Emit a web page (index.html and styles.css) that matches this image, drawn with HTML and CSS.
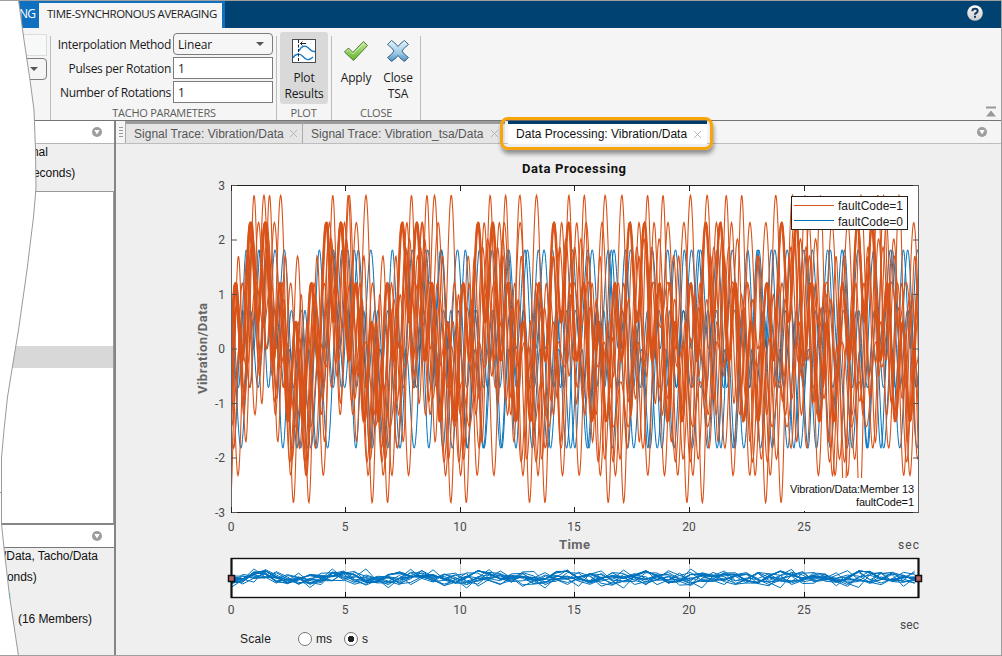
FILE: index.html
```html
<!DOCTYPE html>
<html lang="en">
<head>
<meta charset="utf-8">
<title>Time-Synchronous Averaging</title>
<link rel="stylesheet" href="styles.css">
</head>
<body>
<div class="app">
  <header class="titlebar">
    <div class="ribbon-tabs">
      <span class="ribbon-tab">NG</span>
      <span class="ribbon-tab active"><span class="w-tab">TIME-SYNCHRONOUS AVERAGING</span></span>
    </div>
    <svg class="help" width="16" height="16" viewBox="0 0 16 16"><defs><linearGradient id="hg" x1="0" y1="0" x2="0" y2="1"><stop offset="0" stop-color="#fff"/><stop offset="1" stop-color="#c9c9c9"/></linearGradient></defs><circle cx="8" cy="8" r="7.8" fill="url(#hg)"/><path d="M5.3 6.2Q5.3 3.8 8 3.8T10.7 6Q10.7 7.200 9.200 8Q8 8.600 8 9.700" fill="none" stroke="#123a62" stroke-width="2"/><rect x="7" y="10.800" width="2" height="2" fill="#123a62"/></svg>
  </header>

  <div class="ribbon">
    <section class="group cut">
      <div class="ghost-field"></div>
      <div class="ghost-select"><i class="caret"></i></div>
    </section>
    <section class="group params">
      <div class="form">
        <label>Interpolation Method</label><div class="select"><span>Linear</span><i class="caret"></i></div>
        <label>Pulses per Rotation</label><div class="input">1</div>
        <label>Number of Rotations</label><div class="input">1</div>
      </div>
      <div class="group-name">TACHO PARAMETERS</div>
    </section>
    <section class="group plot">
      <div class="buttons"><div class="tool pressed">
        <svg width="24" height="24" viewBox="0 0 24 24"><rect x=".5" y=".5" width="23" height="23" fill="#fff" stroke="#4b4b4b"/><path d="M1 19C3 14.500 8 14 11 17.500S17 22 21 18" fill="none" stroke="#1479c9" stroke-width="1.300"/><path d="M7 12C9 6.500 13.500 6 16.500 9S20 12.500 23 12.500" fill="none" stroke="#1479c9" stroke-width="1.300"/><path d="M6.500 1V23" stroke="#222" stroke-dasharray="3 1.500"/><path d="M8 4.500H14M10.500 2.500L8.500 4.500L10.500 6.500" fill="none" stroke="#222"/></svg>
        <span>Plot<br>Results</span></div></div>
      <div class="group-name">PLOT</div>
    </section>
    <section class="group close">
      <div class="buttons">
        <div class="tool">
          <svg width="26" height="24" viewBox="0 0 26 24"><defs><linearGradient id="g1" x1="0" y1="0" x2="0" y2="1"><stop offset="0" stop-color="#c9ea9b"/><stop offset="1" stop-color="#5db728"/></linearGradient></defs><path d="M1.500 13L5.500 9L9.800 13.500L20.500 2.500L24.500 6.500L10.500 21.500Z" fill="url(#g1)" stroke="#4b793c"/><path d="M3.300 13L5.600 10.700L9.800 15L20.600 4.200" fill="none" stroke="#e2f5c8" stroke-width=".8"/></svg>
          <span>Apply</span></div>
        <div class="tool">
          <svg width="24" height="24" viewBox="0 0 24 24"><defs><linearGradient id="g2" x1="0" y1="0" x2="0" y2="1"><stop offset="0" stop-color="#e3f4fb"/><stop offset=".6" stop-color="#9ccbe5"/><stop offset="1" stop-color="#4b8bc2"/></linearGradient></defs><path d="M5.500 1.500Q9 3.500 12 7.500Q15 3.500 18.500 1.500L22.500 5.500Q18.500 8 16 12Q18.500 16 22.500 18.500L18.500 22.500Q15 20.500 12 16.500Q9 20.500 5.500 22.500L1.500 18.500Q5.500 16 8 12Q5.500 8 1.500 5.500Z" fill="url(#g2)" stroke="#3d6384"/></svg>
          <span>Close<br>TSA</span></div>
      </div>
      <div class="group-name">CLOSE</div>
    </section>
    <svg class="collapse" width="12" height="12" viewBox="0 0 12 12"><path d="M1 1.500H11" stroke="#999" stroke-width="2"/><path d="M6 4.500L11 10.500H1Z" fill="#999"/></svg>
  </div>

  <div class="body">
    <aside class="side">
      <div class="panel-head"><i class="menu-dot"></i></div>
      <div class="info first"><p class="l1">nal</p><p class="l2">econds)</p></div>
      <div class="list"><div class="selected"></div></div>
      <div class="panel-head second"><i class="menu-dot"></i></div>
      <div class="info details"><p class="d1">/Data, Tacho/Data</p><p class="d2">onds)</p><p class="d3">l</p><p class="d4">(16 Members)</p></div>
    </aside>
    <main class="main">
      <div class="doc-bar">
        <div class="grip"></div>
        <div class="doc first-doc"><span>Signal Trace: Vibration/Data</span><b class="x"></b></div>
        <div class="doc second-doc"><span>Signal Trace: Vibration_tsa/Data</span><b class="x"></b></div>
        <div class="doc current"><span>Data Processing: Vibration/Data</span><b class="x"></b><div class="callout"></div></div>
        <i class="menu-dot bar-menu"></i>
      </div>
      <svg id="figure" class="figure" width="885" height="486" viewBox="116 144 885 486"></svg>
      <div class="scale"><span class="scale-label">Scale</span><span class="radio"></span><span class="ms">ms</span><span class="radio on"></span><span>s</span></div>
    </main>
  </div>
  <svg class="torn" width="40" height="656" viewBox="0 0 40 656"><path d="M0 0H18.500L24 40L30 80L34 110L35.500 150L36 188L33.500 217L27 270L18.500 330L13 363L7.500 397L4 430L1.500 458V524L4 548L9.500 596L18.500 656H0Z" fill="#fff"/><path d="M18.500 0L24 40L30 80L34 110L35.500 150L36 188L33.500 217L27 270L18.500 330L13 363L7.500 397L4 430L1.500 458V524L4 548L9.500 596L18.500 656M0 492.500H2" fill="none" stroke="#9a9a9a"/></svg>
</div>
<script src="script.js"></script>
</body>
</html>
```
FILE: styles.css
```css
* { box-sizing: border-box; }
body { margin: 0; background: #fff; font: 12px "Liberation Sans", Arial, sans-serif; color: #1a1a1a; }
p { margin: 0; }
.app { position: relative; width: 1002px; height: 656px; overflow: hidden; display: flex; flex-direction: column; border: 1px solid #9f9f9f; border-left: 0; }
.torn { position: absolute; left: 0; top: -1px; }

.titlebar { height: 27px; flex: none; background: #004272; display: flex; justify-content: space-between; padding-right: 18px; align-items: stretch; }
.ribbon-tabs { display: flex; background: #1070c0; width: 225px; padding: 2px 3px 0 18px; font: 12px "Open Sans", sans-serif; color: #fff; }
.ribbon-tab { width: 21px; line-height: 22px; padding-left: 1px; letter-spacing: -.8px; }
.ribbon-tab.active { width: 183px; background: #f5f5f5; color: #1c1c1c; padding-left: 8px; white-space: nowrap; }
.w-tab { font-size: 11.5px; letter-spacing: -.46px; }
.help { margin-top: 4px; }

.ribbon { height: 92px; flex: none; background: #f5f5f5; display: flex; padding-top: 4px; position: relative; font: 12px/16px "Open Sans", sans-serif; letter-spacing: -.15px; }
.group { display: flex; flex-direction: column; justify-content: space-between; position: relative; }
.group::after { content: ""; position: absolute; right: 0; top: 4px; bottom: 0; width: 1px; background: #bcbcbc; }
.cut { width: 51px; justify-content: flex-start; align-items: flex-end; padding: 2px 4px 0 0; gap: 2px; }
.ghost-field { width: 30px; height: 22px; border: 1px solid #dcdcdc; background: #f7f8f8; }
.ghost-select { width: 30px; height: 22px; border: 1px solid #7d7d7d; border-radius: 4px; display: flex; align-items: center; justify-content: flex-end; padding-right: 8px; }
.caret { width: 8px; height: 4px; background: #555; clip-path: polygon(0 0, 100% 0, 50% 100%); }
.params { width: 226px; }
.form { display: grid; grid-template-columns: 120px 100px; grid-auto-rows: 22px; row-gap: 2px; column-gap: 2px; padding-top: 1px; text-align: right; line-height: 24px; }
.form label { white-space: nowrap; letter-spacing: -.32px; }
.select, .input { background: #fff; border: 1px solid #7c7c7c; text-align: left; padding: 0 8px 0 4px; line-height: 21px; }
.select { background: #f6f6f6; border-radius: 4px; display: flex; justify-content: space-between; align-items: center; }
.group-name { font-size: 11px; line-height: 14px; color: #5c5c5c; text-align: center; letter-spacing: -.28px; }
.plot { width: 55px; padding-left: 3px; }
.plot .group-name { margin-right: 5px; }
.buttons { display: flex; }
.tool { width: 42px; height: 72px; padding-top: 7px; display: flex; flex-direction: column; align-items: center; text-align: center; }
.tool span { margin-top: 7px; }
.pressed { width: 48px; background: #d9d9d9; border-radius: 3px; }
.close { width: 89px; padding-left: 3px; }
.close .group-name { margin-right: 4px; }
.collapse { position: absolute; right: 4px; bottom: 2px; }

.body { flex: 1; display: flex; border-top: 1px solid #757575; min-height: 0; background: #efefef; }
.side { width: 116px; flex: none; border-right: 2px solid #858585; display: flex; flex-direction: column; }
.panel-head { height: 23px; flex: none; background: #fff; border-bottom: 1px solid #b5b5b5; display: flex; align-items: center; justify-content: flex-end; padding-right: 12px; }
.menu-dot { width: 10px; height: 10px; border-radius: 50%; background: #9d9d9d; display: grid; place-items: center; flex: none; }
.menu-dot::before { content: ""; width: 6px; height: 5px; background: #fff; clip-path: polygon(0 0, 100% 0, 50% 100%); }
.info { line-height: 21px; white-space: nowrap; color: #111; letter-spacing: -.06px; }
.first { height: 47px; flex: none; }
.l1, .l2 { padding-left: 33px; }
.first { line-height: 21px; margin-top: -2px; padding-bottom: 0; height: 49px; }
.l1 { padding-left: 32px; }
.list { height: 334px; flex: none; background: #fff; border: 1px solid #999; border-bottom: 2px solid #858585; padding-top: 154px; }
.selected { height: 22px; background: #d8d8d8; }
.second { border-bottom: 1px solid #777; }
.d1 { padding-left: 3px; margin-top: -2px; } .d2 { padding-left: 7px; } .d3 { padding-left: 8px; color: #2e9df0; } .d4 { padding-left: 18px; }

.main { flex: 1; min-width: 0; display: flex; flex-direction: column; }
.doc-bar { height: 23px; flex: none; background: #f5f5f5; border-bottom: 1px solid #bdbdbd; display: flex; align-items: stretch; }
.grip { width: 9px; background: repeating-linear-gradient(#999 0 1px, transparent 1px 3px) 3px 6px / 4px 10px no-repeat; }
.doc { height: 22px; border-top: 3px solid #9b9b9b; border-left: 1px solid #aaa; background: #e5e5e5; color: #555; display: flex; justify-content: space-between; align-items: center; padding: 0 5px 0 8px; white-space: nowrap; line-height: 18px; letter-spacing: .02px; }
.first-doc { width: 177px; } .second-doc { width: 203px; padding-right: 7px; padding-left: 8px; }
.x { width: 7px; height: 7px; background: linear-gradient(45deg, transparent 43%, #b5b5b5 43% 57%, transparent 57%), linear-gradient(-45deg, transparent 43%, #b5b5b5 43% 57%, transparent 57%); }
.current { position: relative; width: 199px; margin-left: 3px; background: #fff; color: #111; border-left: 0; border-top-color: #003d6b; padding: 0 6px 0 8px; height: 23px; }
.callout { position: absolute; left: -8px; top: -7px; width: 213px; height: 33px; border: 3px solid #f6a50b; border-radius: 8px; box-shadow: 1px 4px 4px rgba(0,0,0,.4), inset 0 1px 2px rgba(0,0,0,.15); }
.bar-menu { margin: 6px 14px 0 auto; }
.figure { display: block; flex: none; }
.figure text { font: 12px Roboto, sans-serif; fill: #4a4a4a; }
.figure .title { font: bold 13px Roboto, sans-serif; fill: #111; }
.figure .axis-title { font: bold 13px Roboto, sans-serif; fill: #666; }
.figure .key { font: 12px "Liberation Sans", Arial, sans-serif; fill: #222; }
.figure .note { font: 11px "Liberation Sans", Arial, sans-serif; fill: #111; }
.scale { display: flex; align-items: center; height: 18px; padding-left: 124px; }
.scale-label { width: 58px; letter-spacing: .2px; }
.radio { width: 14px; height: 14px; border: 1px solid #777; border-radius: 50%; background: #fff; margin-right: 4px; }
.radio.on { background: radial-gradient(circle, #222 0 3px, #fff 3.500px); }
.ms { width: 28px; }
```
FILE: script.js
```js
const figure = document.getElementById("figure");
const NS = "http://www.w3.org/2000/svg";
function add(tag, attrs, text) {
  const node = document.createElementNS(NS, tag);
  for (const k in attrs) node.setAttribute(k, attrs[k]);
  if (text !== undefined) node.textContent = text;
  figure.appendChild(node);
  return node;
}
const LEFT = 231.5, RIGHT = 918.5, ZERO = 349, UNIT = 54.67;
const ORANGE = "#d95319", BLUE = "#0072bd";

// Members: [amplitude of fast tone, slow period, slow-tone centre, offset]
const blue = [[1, 86.6, 275.9, 0], [1, 73, 253.4, 0], [1, 80, 260, 0], [1, 83.3, 267, 0]];
const orange = [
  [2, 78.7, 261.8, 0], [1.75, 85.3, 272.3, .25], [1.25, 81.9, 266.5, .25], [1.5, 77.4, 259.6, 0],
  [1, 75.9, 257.7, .5], [1, 76, 257.2, .5], [1, 75.8, 258.2, .5], [1, 75.9, 256.9, .48],
  [1, 75.85, 258.5, .5], [1.2, 78.2, 260.6, 0], [1.15, 77.1, 258.8, -.1], [.5, 79.4, 263.5, -.1]
];
function value([a, period, centre, offset], x) {
  const p = 2 * Math.PI * (x - centre) / period;
  return Math.cos(p) - a * Math.cos(5 * p) + offset;
}
function trace(member, step, mid, unit) {
  const pts = [];
  for (let x = LEFT; x <= RIGHT; x += step) pts.push(x.toFixed(2) + " " + (mid - unit * value(member, x)).toFixed(2));
  return "M" + pts.join("L");
}

add("rect", {x: LEFT, y: 185.5, width: 687, height: 327, fill: "#fff"});
for (const m of blue) add("path", {d: trace(m, .5, ZERO, UNIT), fill: "none", stroke: BLUE, "stroke-width": 1});
for (const m of orange) add("path", {d: trace(m, .5, ZERO, UNIT), fill: "none", stroke: ORANGE, "stroke-width": 1.1});
add("path", {d: "M231.5 185.5V512.5M918.5 185.5V512.5", stroke: "#666"});
add("path", {d: "M231 185.5H919M231 512.5H919", stroke: "#222"});
for (let i = 0; i <= 6; i++) {
  const y = 185.5 + i * 54.5;
  add("path", {d: `M231 ${y}h6M919 ${y}h-6`, stroke: "#555"});
  add("text", {x: 225, y: y + 4, "text-anchor": "end"}, 3 - i);
}
for (let i = 0; i < 6; i++) {
  const x = Math.floor(231 + i * 114.6) + .5;
  add("path", {d: `M${x} 185v6M${x} 513v-6`, stroke: "#222"});
  add("text", {x: x - .5, y: 531, "text-anchor": "middle"}, i * 5);
}
add("text", {class: "title", x: 522, y: 173, textLength: 104}, "Data Processing");
add("text", {class: "axis-title", x: 559, y: 549, textLength: 31}, "Time");
add("text", {class: "axis-title", transform: "translate(207 394) rotate(-90)", textLength: 91}, "Vibration/Data");
add("text", {x: 898, y: 549, textLength: 21}, "sec");

add("rect", {x: 791.5, y: 196.5, width: 116, height: 33, fill: "#fff", stroke: "#222"});
add("path", {d: "M794 205.500H834", stroke: ORANGE});
add("path", {d: "M794 220.500H834", stroke: BLUE});
add("text", {class: "key", x: 838, y: 210, textLength: 65}, "faultCode=1");
add("text", {class: "key", x: 838, y: 226, textLength: 65}, "faultCode=0");
add("rect", {x: 788, y: 478, width: 128, height: 33, fill: "#fff"});
add("text", {class: "note", x: 790, y: 493, textLength: 124}, "Vibration/Data:Member 13");
add("text", {class: "note", x: 856, y: 506, textLength: 58}, "faultCode=1");

// Overview strip below the axes
add("rect", {x: 231.5, y: 558.5, width: 687, height: 39, fill: "#fff"});
for (let i = 0; i < 6; i++) {
  const x = Math.floor(231 + i * 114.6) + .5;
  add("path", {d: `M${x} 559V597`, stroke: "#ccc"});
}
for (const m of blue.concat(orange)) add("path", {d: trace(m, 11.2, 578.5, 3.4), fill: "none", stroke: BLUE});
add("rect", {x: 231.5, y: 558.5, width: 687, height: 39, fill: "none", stroke: "#111", "stroke-width": 1.4});
for (let i = 0; i < 6; i++) {
  const x = Math.floor(231 + i * 114.6) + .5;
  add("path", {d: `M${x} 559v5M${x} 597v-5`, stroke: "#111"});
  add("text", {x: x - .5, y: 614, "text-anchor": "middle"}, i * 5);
}
for (const x of [231.5, 918.5]) {
  add("path", {d: `M${x} 558V598`, stroke: "#111", "stroke-width": 2});
  add("rect", {x: x - 3, y: 575.5, width: 6, height: 6, fill: "#b76366", stroke: "#111", "stroke-width": 1.5});
}
add("text", {x: 900, y: 629, textLength: 19}, "sec");
```
